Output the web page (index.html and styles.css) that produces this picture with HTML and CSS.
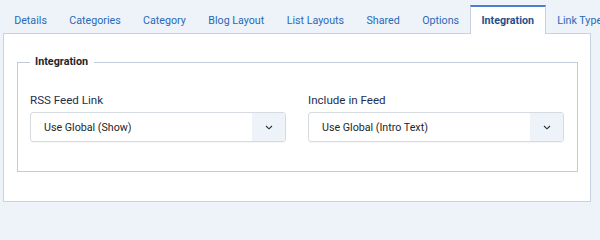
FILE: index.html
```html
<!DOCTYPE html>
<html lang="en">
<head>
<meta charset="utf-8">
<title>Integration</title>
<link rel="stylesheet" href="styles.css">
</head>
<body>
<div class="page">
  <nav class="tabs">
    <span class="tab">Details</span>
    <span class="tab">Categories</span>
    <span class="tab">Category</span>
    <span class="tab">Blog Layout</span>
    <span class="tab">List Layouts</span>
    <span class="tab">Shared</span>
    <span class="tab">Options</span>
    <span class="tab active">Integration</span>
    <span class="tab">Link Types</span>
  </nav>
  <div class="panel">
    <fieldset class="group">
      <legend>Integration</legend>
      <div class="fields">
        <div class="field">
          <div class="label">RSS Feed Link</div>
          <div class="select">
            <span class="value">Use Global (Show)</span>
            <span class="arrow"><svg width="8" height="5" viewBox="0 0 8 5"><path d="M1 1 L4 3.8 L7 1" fill="none" stroke="#2b2f36" stroke-width="1.1"/></svg></span>
          </div>
        </div>
        <div class="field">
          <div class="label">Include in Feed</div>
          <div class="select">
            <span class="value">Use Global (Intro Text)</span>
            <span class="arrow"><svg width="8" height="5" viewBox="0 0 8 5"><path d="M1 1 L4 3.8 L7 1" fill="none" stroke="#2b2f36" stroke-width="1.1"/></svg></span>
          </div>
        </div>
      </div>
    </fieldset>
  </div>
</div>
</body>
</html>
```

FILE: styles.css
```css
html, body {
  margin: 0;
  padding: 0;
}
body {
  background: #eef2f9;
  font-family: Roboto, "Liberation Sans", sans-serif;
  width: 600px;
  height: 209px;
  overflow: hidden;
}
.page {
  padding: 5px 9px 0 3px;
}
.tabs {
  display: flex;
  white-space: nowrap;
  height: 28px;
  position: relative;
  z-index: 1;
}
.tab {
  display: flex;
  align-items: center;
  padding: 2px 11.2px 0;
  height: 26px;
  font-size: 10.7px;
  color: #2a69b8;
  flex: none;
}
.tab.active {
  background: #fff;
  border-top: 2px solid #4b7fcb;
  border-left: 1px solid #c9d1e0;
  border-right: 1px solid #c9d1e0;
  padding: 0 11px 0 10.2px;
  height: 27px;
  font-weight: 700;
  color: #1e4f8f;
}
.panel {
  background: #fff;
  border: 1px solid #c9d1e0;
  height: 169px;
  box-sizing: border-box;
  padding: 21px 12px 0 13px;
}
.group {
  margin: 0;
  border: 1px solid #c3cbdb;
  padding: 0 13px 29px 12px;
}
.group legend {
  padding: 0 6px 0 5px;
  font-size: 10.8px;
  font-weight: 700;
  line-height: 14px;
  color: #22262a;
}
.fields {
  display: grid;
  grid-template-columns: 256px 256px;
  column-gap: 22px;
  margin-top: 23px;
}
.label {
  font-size: 11.6px;
  line-height: 16px;
  color: #1f2d4d;
  margin-bottom: 4px;
}
.select {
  display: flex;
  height: 30px;
  box-sizing: border-box;
  border: 1px solid #d6dae1;
  border-radius: 3px;
  overflow: hidden;
  box-shadow: 0 1px 1px rgba(0,0,0,0.04);
}
.value {
  flex: 1;
  display: flex;
  align-items: center;
  padding-left: 13px;
  font-size: 10.7px;
  color: #22262a;
}
.arrow {
  width: 33px;
  background: #eef2f9;
  display: flex;
  align-items: center;
  justify-content: center;
}
```
